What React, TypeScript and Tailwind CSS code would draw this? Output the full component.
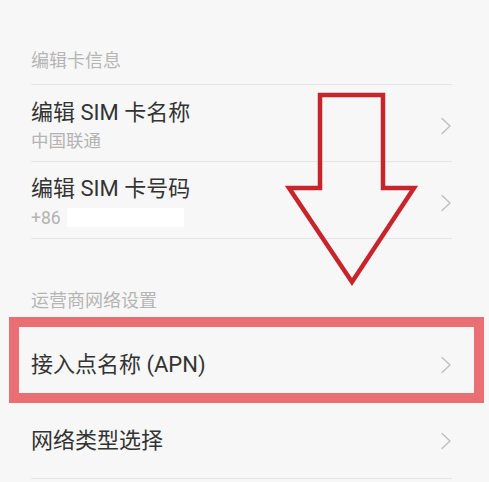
import type { ReactNode } from "react";

function Chevron() {
    return (
        <svg className="w-[12px] h-[18px] shrink-0" viewBox="0 0 12 18" fill="none">
            <path d="M2 1.5 L10 9 L2 16.5" stroke="#bdbdbd" strokeWidth={1.3} strokeLinecap="round" strokeLinejoin="round" />
        </svg>
    );
}

function Row({ title, sub, className }: { title: string; sub?: ReactNode; className?: string }) {
    return (
        <div className={`flex items-center justify-between ${className ?? ""}`}>
            <div className="flex flex-col">
                <div className="text-[22px] leading-[22px] text-[#333333]">{title}</div>
                {sub && <div className="mt-[8px] text-[17.5px] leading-[18px] text-[#b3b3b3]">{sub}</div>}
            </div>
            <Chevron />
        </div>
    );
}

export default function App() {
    return (
        <div
            className="relative w-[489px] h-[482px] overflow-hidden bg-[#f7f7f7]"
            style={{ fontFamily: 'Roboto, "Noto Sans CJK SC", sans-serif' }}
        >
            <div className="pl-[31px] pr-[37px]">
                {/* 编辑卡信息 */}
                <div className="pt-[52px] pb-[14px] border-b border-[#e4e4e4] text-[18px] leading-[18px] text-[#b5b5b5]">
                    编辑卡信息
                </div>
                <Row className="h-[77px] border-b border-[#e4e4e4] pt-[5px]" title="编辑 SIM 卡名称" sub="中国联通" />
                <Row
                    className="h-[77px] border-b border-[#e4e4e4] pt-[5px]"
                    title="编辑 SIM 卡号码"
                    sub={
                        <span className="flex items-center">
                            +86
                            <span className="ml-[6px] inline-block w-[117px] h-[19px] bg-white" />
                        </span>
                    }
                />

                {/* 运营商网络设置 */}
                <div className="pt-[53px] pb-[16px] text-[18px] leading-[18px] text-[#b5b5b5]">
                    运营商网络设置
                </div>
                <Row className="h-[78px]" title="接入点名称 (APN)" />
                <Row className="h-[75px] border-b border-[#e4e4e4]" title="网络类型选择" />
            </div>

            {/* highlight box */}
            <div className="absolute left-[9px] top-[317px] w-[475px] h-[86px] border-[10px] border-[#ea6f73]" />

            {/* arrow */}
            <svg className="absolute left-0 top-0 w-[489px] h-[482px] pointer-events-none" viewBox="0 0 489 482" fill="none">
                <path
                    d="M320 95 L383 95 L383 188 L414 188 L352 282 L289 188 L320 188 Z"
                    stroke="#c8242c"
                    strokeWidth={4.5}
                    strokeLinejoin="miter"
                />
            </svg>
        </div>
    );
}
